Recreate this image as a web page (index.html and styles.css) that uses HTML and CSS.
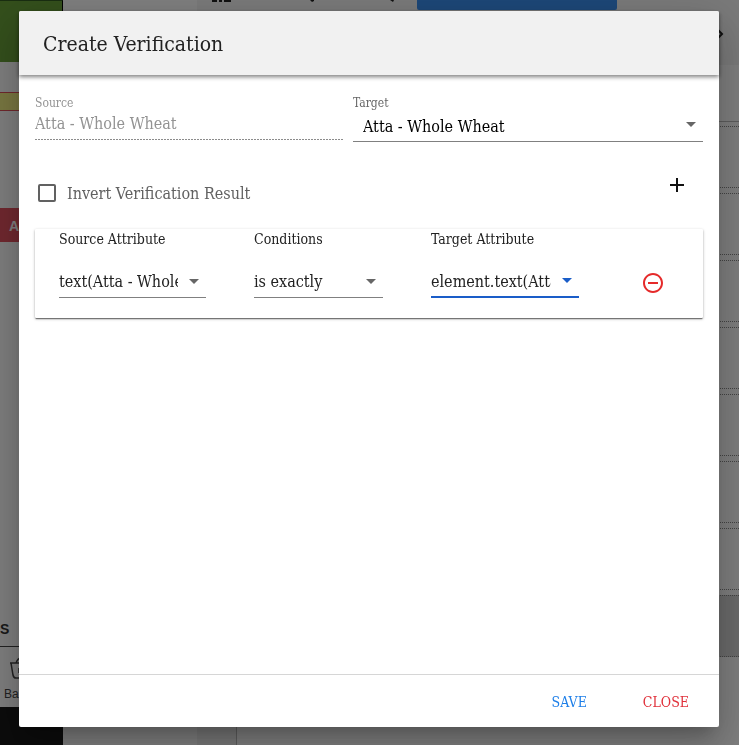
FILE: index.html
```html
<!DOCTYPE html>
<html lang="en">
<head>
<meta charset="utf-8">
<meta name="viewport" content="width=device-width, initial-scale=1">
<title>Create Verification</title>
<link rel="stylesheet" href="styles.css">
</head>
<body>
<div class="workspace" aria-hidden="true">
  <div class="device">
    <div class="device-banner"></div>
    <div class="device-mark"></div>
    <div class="device-action">A</div>
    <div class="device-heading">S</div>
    <div class="device-tab">
      <svg width="32" height="24" viewBox="0 0 32 24" fill="none" stroke="#444" stroke-width="1.5"><path d="M10 6h18M11 6l2 12q.6 3 3 3h7M16 6q2-5 5-5M19 11v5"/></svg>
      <span>Ba</span>
    </div>
    <div class="device-nav"></div>
  </div>
  <div class="gutter"></div>
  <div class="steps">
    <div class="toolbar">
      <svg width="200" height="3" viewBox="0 0 200 3" fill="#222"><path d="M15 0h5v2h-5zM22 0h3v2h-3zM27 0h7v2h-7zM113 0h4v1l-2 1zM193 0h4l-1 2z"/></svg>
      <div class="toolbar-button"></div>
      <svg class="chevron" width="8" height="12" viewBox="0 0 8 12" fill="none" stroke="#222" stroke-width="2"><path d="M1 1l5 5-5 5"/></svg>
    </div>
    <div class="step-list">
      <div class="step"></div><div class="step"></div><div class="step"></div><div class="step"></div>
      <div class="step"></div><div class="step"></div><div class="step"></div><div class="step active"></div>
    </div>
  </div>
</div>
<div class="backdrop">
  <form class="dialog" role="dialog" aria-labelledby="title">
    <header class="dialog-header"><h1 id="title">Create Verification</h1></header>
    <main class="dialog-body">
      <div class="elements">
        <div class="field source">
          <label for="source">Source</label>
          <input id="source" type="text" value="Atta - Whole Wheat" disabled>
        </div>
        <div class="field target">
          <label for="target">Target</label>
          <div class="select">
            <select id="target"><option>Atta - Whole Wheat</option></select>
            <svg class="arrow" width="10" height="5" viewBox="0 0 10 5"><path d="M0 0h10L5 5z"/></svg>
          </div>
        </div>
      </div>
      <div class="options">
        <label class="invert"><input type="checkbox"><span>Invert Verification Result</span></label>
        <button class="icon-button add" type="button" aria-label="Add condition">
          <svg width="24" height="24" viewBox="0 0 24 24"><path d="M19 13h-6v6h-2v-6H5v-2h6V5h2v6h6z"/></svg>
        </button>
      </div>
      <section class="condition">
        <div class="field">
          <label for="source-attribute">Source Attribute</label>
          <div class="select">
            <select id="source-attribute"><option>text(Atta - Whole Wheat)</option></select>
            <svg class="arrow" width="10" height="5" viewBox="0 0 10 5"><path d="M0 0h10L5 5z"/></svg>
          </div>
        </div>
        <div class="field">
          <label for="conditions">Conditions</label>
          <div class="select">
            <select id="conditions"><option>is exactly</option></select>
            <svg class="arrow" width="10" height="5" viewBox="0 0 10 5"><path d="M0 0h10L5 5z"/></svg>
          </div>
        </div>
        <div class="field">
          <label for="target-attribute">Target Attribute</label>
          <div class="select focused">
            <select id="target-attribute"><option>element.text(Atta - Whole Wheat)</option></select>
            <svg class="arrow" width="10" height="5" viewBox="0 0 10 5"><path d="M0 0h10L5 5z"/></svg>
          </div>
        </div>
        <button class="icon-button remove" type="button" aria-label="Remove condition">
          <svg width="24" height="24" viewBox="0 0 24 24"><path d="M7 11v2h10v-2H7zm5-9C6.480 2 2 6.480 2 12s4.480 10 10 10 10-4.480 10-10S17.520 2 12 2zm0 18c-4.410 0-8-3.590-8-8s3.590-8 8-8 8 3.590 8 8-3.590 8-8 8z"/></svg>
        </button>
      </section>
    </main>
    <footer class="dialog-footer">
      <button class="save" type="button">SAVE</button>
      <button class="close" type="button">CLOSE</button>
    </footer>
  </form>
</div>
</body>
</html>
```
FILE: styles.css
```css
* { box-sizing: border-box; }

body {
  margin: 0;
  height: 100vh;
  overflow: hidden;
  background: #fff;
  color: #212121;
  font-family: "Roboto Slab", "DejaVu Serif Condensed", "DejaVu Serif", serif;
  font-size: 16px;
}

button, input, select { font: inherit; color: inherit; }

/* Page behind the dialog */
.workspace {
  display: grid;
  grid-template-columns: 63px 134px 1fr;
  height: 100vh;
  font-family: "Liberation Sans", sans-serif;
}

.device {
  display: flex;
  flex-direction: column;
  overflow: hidden;
}

.device-banner {
  height: 62px;
  background: #689f38;
  border-top: 1px solid #335c22;
  border-right: 1px solid #000;
  flex: none;
}

.device-mark {
  height: 19px;
  margin-top: 30px;
  background: #f3ef83;
  border: 1px solid #e0505a;
  border-left: 0;
  flex: none;
}

.device-action {
  height: 34px;
  margin-top: 97px;
  padding-left: 9px;
  background: #e2515f;
  color: #fff;
  font-size: 14px;
  font-weight: bold;
  line-height: 36px;
  flex: none;
}

.device-heading {
  margin-top: auto;
  height: 28px;
  color: #333;
  font-size: 14px;
  font-weight: bold;
  line-height: 22px;
}

.device-tab {
  height: 61px;
  padding-top: 10px;
  border-top: 1px solid #444;
  color: #444;
  font-size: 12px;
}

.device-tab svg { display: block; }

.device-tab span {
  display: block;
  padding-left: 4px;
  line-height: 26px;
}

.device-nav {
  height: 38px;
  background: #181818;
  flex: none;
}

.gutter { background: #fff; }

.steps {
  display: flex;
  flex-direction: column;
  background: linear-gradient(90deg, #f2f2f2 39px, #bbb 39px, #bbb 40px, #fff 40px);
}

.toolbar {
  display: flex;
  height: 65px;
  background: #f5f5f5;
  flex: none;
}

.toolbar svg { flex: none; }

.toolbar-button {
  width: 200px;
  height: 10px;
  margin-left: 20px;
  background: #3a8ff0;
  border-radius: 0 0 2px 2px;
}

.toolbar .chevron {
  margin: 28px 15px 0 auto;
}

.step-list {
  display: grid;
  gap: 5px;
  margin: 56px 0 0 40px;
  padding-top: 4px;
  border-top: 1px solid #bbb;
}

.step {
  height: 62px;
  border: 1px dotted #888;
  border-width: 1px 0;
}

.step.active { background: #d6d6d6; }

/* Dialog */
.backdrop {
  position: fixed;
  inset: 0;
  display: flex;
  padding: 11px 20px 18px 19px;
  background: rgba(0, 0, 0, .5);
}

.dialog {
  display: flex;
  flex: 1;
  flex-direction: column;
  min-width: 0;
  background: #fff;
  border-radius: 2px;
  box-shadow: 0 11px 15px -7px rgba(0, 0, 0, .2), 0 24px 38px 3px rgba(0, 0, 0, .14), 0 9px 46px 8px rgba(0, 0, 0, .12);
}

.dialog-header {
  display: flex;
  align-items: center;
  height: 64px;
  padding: 2px 24px 0;
  background: #f1f1f1;
  border-radius: 2px 2px 0 0;
  box-shadow: 0 2px 4px rgba(0, 0, 0, .5);
}

h1 {
  margin: 0;
  font-size: 21px;
  font-weight: 400;
}

.dialog-body {
  flex: 1;
  padding: 20px 16px;
}

.elements {
  display: grid;
  grid-template-columns: 308fr 350fr;
  gap: 10px;
  align-items: start;
}

.field {
  display: flex;
  flex-direction: column;
  min-width: 0;
}

.elements label {
  color: #666;
  font-size: 12px;
  line-height: 16px;
}

.elements .source label { color: #939393; }

input[type="text"] {
  width: 100%;
  height: 29px;
  padding: 0 0 5px;
  border: 0;
  background: repeating-linear-gradient(90deg, #8c8c8c 0 2px, #fff 2px 3px) bottom / 100% 1px no-repeat;
  color: #939393;
}

.select {
  display: grid;
  grid-template-columns: 1fr 28px;
  align-items: center;
  border-bottom: 1px solid #808080;
}

.select select {
  grid-area: 1 / 1;
  width: 100%;
  height: 30px;
  padding: 0 0 2px;
  border: 0;
  outline: 0;
  background: none;
  appearance: none;
  overflow: hidden;
  text-overflow: clip;
}

.select .arrow {
  grid-area: 1 / 2;
  margin: 0 0 2px 11px;
  fill: #666;
}

.target .select {
  grid-template-columns: 1fr 18px;
  color: #000;
}

.target .select select { padding: 0 0 0 10px; }
.target .select .arrow { margin: 0 0 4px 1px; }

.select.focused { border-bottom: 2px solid #1a5dc8; }
.select.focused select { height: 29px; padding-bottom: 1px; }
.select.focused .arrow { fill: #1a5dc8; }

.options {
  display: flex;
  align-items: center;
  justify-content: space-between;
  height: 24px;
  margin: 39px 14px 24px 3px;
}

.invert {
  display: flex;
  align-items: center;
  gap: 11px;
  color: #616161;
}

.invert input {
  appearance: none;
  width: 18px;
  height: 18px;
  margin: 0;
  border: 2px solid #616161;
  border-radius: 2px;
}

.icon-button {
  display: flex;
  padding: 0;
  border: 0;
  background: none;
}

.add {
  align-self: flex-start;
  margin-top: -8px;
  fill: #111;
}

.condition {
  display: grid;
  grid-template-columns: 147fr 129fr 148fr 76px;
  gap: 48px;
  padding: 0 0 20px 24px;
  border-radius: 1px;
  box-shadow: 0 2px 1px -1px rgba(0, 0, 0, .3), 0 1px 1px rgba(0, 0, 0, .2), 0 1px 3px rgba(0, 0, 0, .3);
}

.condition label {
  height: 38px;
  font-size: 14px;
  line-height: 20px;
}

.remove {
  align-self: end;
  margin: 0 0 3px 14px;
  fill: #e52a2a;
}

.dialog-footer {
  display: flex;
  align-items: center;
  justify-content: flex-end;
  gap: 24px;
  height: 53px;
  padding: 2px 14px 0;
  border-top: 1px solid #d6d6d6;
}

.dialog-footer button {
  height: 36px;
  padding: 0 16px;
  border: 0;
  background: none;
  font-size: 14px;
}

.save { color: #1e7fe8; }
.close { color: #e0303a; }
```
